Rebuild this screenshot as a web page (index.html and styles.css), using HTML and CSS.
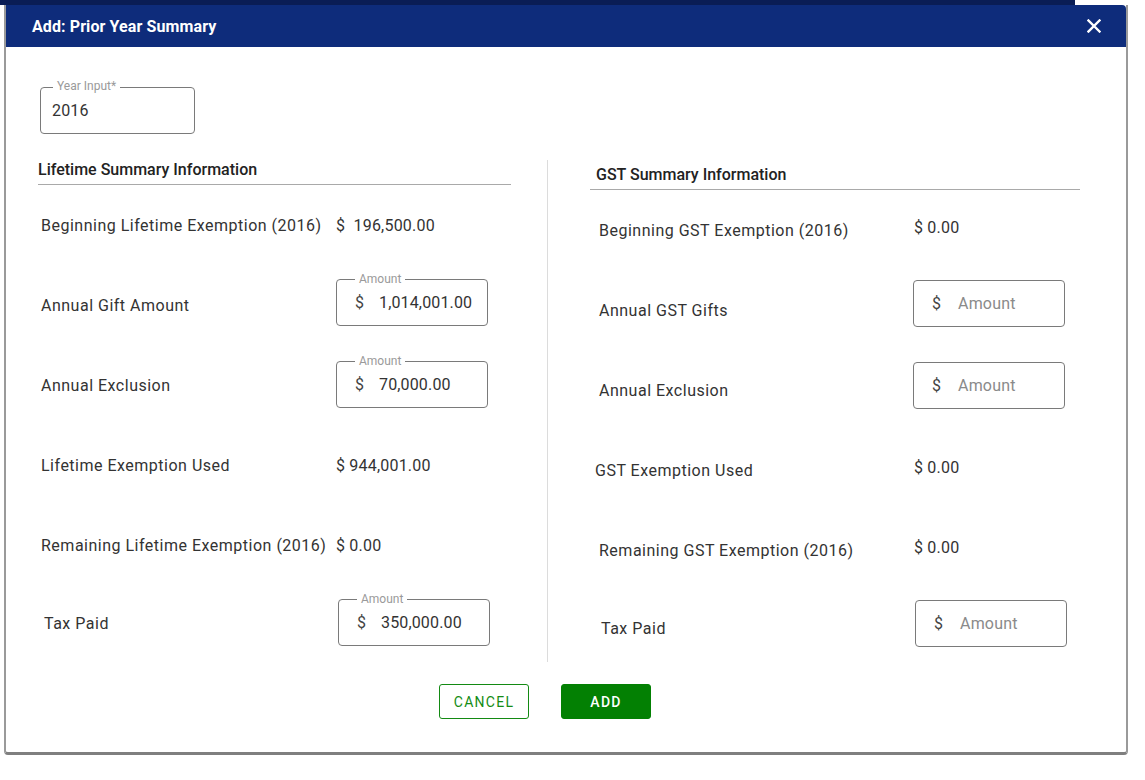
FILE: index.html
```html
<!DOCTYPE html>
<html>
<head>
<meta charset="utf-8">
<link rel="stylesheet" href="styles.css">
</head>
<body>
<div class="topstrip"></div>
<div class="dialog">
  <div class="dialog-header">
    <h1 class="dialog-title">Add: Prior Year Summary</h1>
    <button class="close-btn" aria-label="Close">
      <svg width="14" height="14" viewBox="0 0 14 14"><path d="M1.5 1.5 L12.5 12.5 M12.5 1.5 L1.5 12.5" stroke="#fff" stroke-width="2.4" stroke-linecap="square"/></svg>
    </button>
  </div>
  <div class="dialog-body">
    <div class="field year-field">
      <span class="field-label">Year Input*</span>
      <span class="field-value">2016</span>
    </div>

    <div class="columns">
      <section class="col col-left">
        <h2 class="col-title">Lifetime Summary Information</h2>
        <div class="row">
          <span class="row-label">Beginning Lifetime Exemption (2016)</span>
          <span class="row-value">$&nbsp;&nbsp;196,500.00</span>
        </div>
        <div class="row">
          <span class="row-label">Annual Gift Amount</span>
          <div class="field money-field">
            <span class="field-label">Amount</span>
            <span class="dollar">$</span><span class="field-value">1,014,001.00</span>
          </div>
        </div>
        <div class="row">
          <span class="row-label">Annual Exclusion</span>
          <div class="field money-field">
            <span class="field-label">Amount</span>
            <span class="dollar">$</span><span class="field-value">70,000.00</span>
          </div>
        </div>
        <div class="row">
          <span class="row-label">Lifetime Exemption Used</span>
          <span class="row-value">$ 944,001.00</span>
        </div>
        <div class="row">
          <span class="row-label">Remaining Lifetime Exemption (2016)</span>
          <span class="row-value">$ 0.00</span>
        </div>
        <div class="row row-last">
          <span class="row-label shift-l">Tax Paid</span>
          <div class="field money-field shift">
            <span class="field-label">Amount</span>
            <span class="dollar">$</span><span class="field-value">350,000.00</span>
          </div>
        </div>
      </section>

      <div class="divider"></div>

      <section class="col col-right">
        <h2 class="col-title">GST Summary Information</h2>
        <div class="row">
          <span class="row-label">Beginning GST Exemption (2016)</span>
          <span class="row-value up">$ 0.00</span>
        </div>
        <div class="row">
          <span class="row-label">Annual GST Gifts</span>
          <div class="field money-field empty">
            <span class="dollar">$</span><span class="placeholder">Amount</span>
          </div>
        </div>
        <div class="row">
          <span class="row-label">Annual Exclusion</span>
          <div class="field money-field empty">
            <span class="dollar">$</span><span class="placeholder">Amount</span>
          </div>
        </div>
        <div class="row">
          <span class="row-label tight">GST Exemption Used</span>
          <span class="row-value up">$ 0.00</span>
        </div>
        <div class="row">
          <span class="row-label">Remaining GST Exemption (2016)</span>
          <span class="row-value up">$ 0.00</span>
        </div>
        <div class="row row-last">
          <span class="row-label shift-r">Tax Paid</span>
          <div class="field money-field empty shift">
            <span class="dollar">$</span><span class="placeholder">Amount</span>
          </div>
        </div>
      </section>
    </div>

    <div class="actions">
      <button class="btn btn-outline">CANCEL</button>
      <button class="btn btn-filled">ADD</button>
    </div>
  </div>
</div>
</body>
</html>
```

FILE: styles.css
```css
* { box-sizing: border-box; }

html, body {
  margin: 0;
  padding: 0;
  background: #ffffff;
  font-family: Roboto, "Liberation Sans", Arial, sans-serif;
}

.topstrip {
  height: 5px;
  width: 1075px;
  background: #0a1d55;
}

.dialog {
  margin-left: 4px;
  width: 1124px;
  height: 750px;
  background: #fff;
  border-left: 2px solid #9a9a9a;
  border-right: 2px solid #9a9a9a;
  border-bottom: 3px solid #7f7f7f;
  border-radius: 0 0 4px 4px;
  display: flex;
  flex-direction: column;
}

.dialog-header {
  height: 42px;
  background: #0e2c7b;
  display: flex;
  align-items: center;
  justify-content: space-between;
  padding: 0 25px 0 26px;
  border-top-right-radius: 4px;
}

.dialog-title {
  margin: 0;
  color: #fff;
  font-size: 16px;
  font-weight: 700;
  letter-spacing: 0.1px;
}

.close-btn {
  background: none;
  border: none;
  padding: 0;
  width: 14px;
  height: 14px;
  display: flex;
  cursor: pointer;
}

.dialog-body {
  padding: 40px 32px 0 32px;
  color: #333;
}

/* outlined field */
.field {
  position: relative;
  border: 1px solid #7a7a7a;
  border-radius: 4px;
  height: 47px;
  display: flex;
  align-items: center;
}

.field-label {
  position: absolute;
  top: -9px;
  background: #fff;
  padding: 0 4px;
  font-size: 12px;
  line-height: 16px;
  color: #9a9a9a;
}

.year-field {
  width: 155px;
  margin-left: 2px;
  padding-left: 11px;
}

.year-field .field-label {
  left: 12px;
  top: -10px;
}

.field-value {
  font-size: 16px;
  color: #333;
  letter-spacing: 0.15px;
}

.money-field {
  width: 152px;
  padding-left: 18px;
  align-self: start;
  margin-top: 14px;
}

.col-left .row:nth-child(4) .money-field { margin-top: 16px; }

.col-right .money-field { margin-top: 10px; }
.col-right .row:nth-child(4) .money-field { margin-top: 12px; }

.money-field .field-label {
  left: 18px;
}

.dollar {
  font-size: 16px;
  color: #444;
  width: 24px;
}

.money-field.empty .dollar {
  width: 26px;
}

.placeholder {
  font-size: 16px;
  color: #8a8a8a;
  letter-spacing: 0.2px;
}

/* columns */
.columns {
  display: flex;
  align-items: flex-start;
  margin-top: 26px;
}

.col-left {
  width: 473px;
}

.col-right {
  width: 490px;
  margin-top: 5px;
}

.divider {
  width: 1px;
  height: 502px;
  background: #dcdcdc;
  margin: 0 42px 0 36px;
}

.col-title {
  margin: 0;
  font-size: 16px;
  font-weight: 500;
  line-height: 20px;
  color: #222;
  padding: 0 0 4px 0;
  border-bottom: 1px solid #a9a9a9;
}

.col-right .col-title {
  padding-left: 6px;
}

.row {
  height: 80px;
  display: grid;
  align-items: center;
}

.col-left .row {
  grid-template-columns: 298px 1fr;
}

.col-right .row {
  grid-template-columns: 323px 1fr;
}

.row-last {
  height: 77px;
}

.row-label {
  font-size: 16px;
  color: #333;
  letter-spacing: 0.5px;
  white-space: nowrap;
}

.col-left .row-label {
  padding-left: 3px;
}

.col-left .row-label.shift-l {
  padding-left: 6px;
}

.col-right .row-label {
  padding-left: 9px;
}

.col-right .row-label.tight {
  padding-left: 5px;
}

.col-right .row-label.shift-r {
  padding-left: 11px;
}

.row-value {
  font-size: 16px;
  color: #333;
  letter-spacing: 0.2px;
  white-space: nowrap;
}

.row-value.up {
  position: relative;
  top: -3px;
  padding-left: 1px;
}

.money-field.shift {
  margin-left: 2px;
}

/* actions */
.actions {
  display: flex;
  gap: 32px;
  margin-top: 17px;
  margin-left: 401px;
}

.btn {
  width: 90px;
  height: 35px;
  border-radius: 3px;
  font-family: Roboto, "Liberation Sans", Arial, sans-serif;
  font-size: 14px;
  font-weight: 500;
  letter-spacing: 1.25px;
  cursor: pointer;
}

.btn-outline {
  background: #fff;
  border: 1px solid #138a13;
  color: #158c15;
  font-weight: 400;
}

.btn-filled {
  background: #038003;
  border: 1px solid #038003;
  color: #fff;
}
```
